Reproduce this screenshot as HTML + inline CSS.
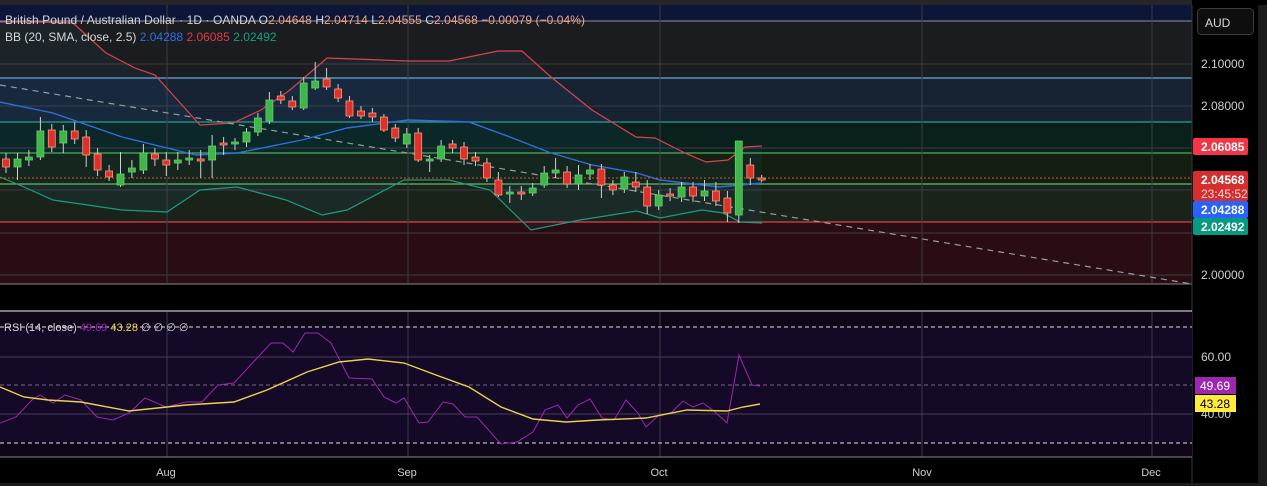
<!DOCTYPE html>
<html><head><meta charset="utf-8"><style>
html,body{margin:0;padding:0;background:#000;}
svg{display:block;font-family:"Liberation Sans",sans-serif;}
.g{fill:#3fb54a;stroke:#5fd06a;stroke-width:0.8}
.r{fill:#e0302c;stroke:#f59b7b;stroke-width:0.8}
.w{stroke:#cfcfcf;stroke-width:1}
</style></head><body>
<svg width="1267" height="486" viewBox="0 0 1267 486" xmlns="http://www.w3.org/2000/svg">
<rect width="1267" height="486" fill="#000"/>
<rect x="0" y="0" width="1267" height="5" fill="#262626"/>
<rect x="0" y="5" width="1192" height="16" fill="#0b1638"/>
<rect x="0" y="21" width="1192" height="57" fill="#1b1c1f"/>
<rect x="0" y="78" width="1192" height="44" fill="#172233"/>
<rect x="0" y="122" width="1192" height="31" fill="#0a201d"/>
<rect x="0" y="153" width="1192" height="31" fill="#141f12"/>
<rect x="0" y="184" width="1192" height="38" fill="#19231a"/>
<rect x="0" y="222" width="1192" height="62" fill="#2a0d12"/>
<g stroke="#3a3d44" stroke-width="1">
<line x1="0" y1="64" x2="1192" y2="64"/>
<line x1="0" y1="106" x2="1192" y2="106"/>
<line x1="0" y1="148" x2="1192" y2="148"/>
<line x1="0" y1="190" x2="1192" y2="190"/>
<line x1="0" y1="233" x2="1192" y2="233"/>
<line x1="0" y1="275" x2="1192" y2="275"/>
</g>
<line x1="0" y1="21" x2="1192" y2="21" stroke="#8a92a8" stroke-width="1"/>
<line x1="0" y1="78" x2="1192" y2="78" stroke="#64a8e0" stroke-width="1.2"/>
<line x1="0" y1="122" x2="1192" y2="122" stroke="#2aa08a" stroke-width="1.2"/>
<line x1="0" y1="153" x2="1192" y2="153" stroke="#4caf50" stroke-width="1.2"/>
<line x1="0" y1="184" x2="1192" y2="184" stroke="#66bb6a" stroke-width="1.2"/>
<line x1="0" y1="222" x2="1192" y2="222" stroke="#e04050" stroke-width="1.2"/>
<line x1="0" y1="284" x2="1192" y2="284" stroke="#8a8a95" stroke-width="1"/>
<g stroke="#3a3d44" stroke-width="1">
<line x1="167" y1="5" x2="167" y2="284"/><line x1="408" y1="5" x2="408" y2="284"/><line x1="660" y1="5" x2="660" y2="284"/><line x1="922" y1="5" x2="922" y2="284"/><line x1="1152" y1="5" x2="1152" y2="284"/>
</g>
<polygon fill="rgba(40,140,200,0.07)" points="0,22 40,22 73,23 106,53 135,68 155,75 200,125 233,123 261,110 290,90 327,58 408,61 449,61 498,51 522,51 551,77 592,110 636,137 655,138 685,153 706,162 728,160 745,147 762,146 762,223 740,222 723,213 702,210 660,218 637,211 580,220 531,230 490,190 449,180 404,180 347,210 322,215 286,200 237,187 200,190 167,212 122,210 53,200 24,187 0,177"/>
<polyline fill="none" stroke="#d8434f" stroke-width="1.2" points="0,22 40,22 73,23 106,53 135,68 155,75 200,125 233,123 261,110 290,90 327,58 408,61 449,61 498,51 522,51 551,77 592,110 636,137 655,138 685,153 706,162 728,160 745,147 762,146"/>
<polyline fill="none" stroke="#2d6fe0" stroke-width="1.4" points="0,102 53,113 122,137 196,155 237,153 302,140 347,128 408,120 469,122 510,137 551,153 592,165 637,173 660,180 719,187 762,183"/>
<polyline fill="none" stroke="#1f9a80" stroke-width="1.2" points="0,177 24,187 53,200 122,210 167,212 200,190 237,187 286,200 322,215 347,210 404,180 449,180 490,190 531,230 580,220 637,211 660,218 702,210 723,213 740,222 762,223"/>
<line x1="0" y1="85" x2="1192" y2="284" stroke="#9a9aa0" stroke-width="1.2" stroke-dasharray="6 5"/>
<line x1="0" y1="178" x2="1192" y2="178" stroke="#e0502c" stroke-width="1" stroke-dasharray="2 2"/>
<g class="w">
<line x1="6" y1="153" x2="6" y2="173"/><line x1="17.5" y1="153" x2="17.5" y2="180"/><line x1="28.9" y1="150" x2="28.9" y2="166"/><line x1="40.4" y1="117" x2="40.4" y2="160"/><line x1="51.8" y1="124" x2="51.8" y2="152"/><line x1="63.3" y1="125" x2="63.3" y2="153"/><line x1="74.7" y1="122" x2="74.7" y2="144"/><line x1="86.2" y1="130" x2="86.2" y2="167"/><line x1="97.6" y1="148" x2="97.6" y2="176"/><line x1="109.1" y1="165" x2="109.1" y2="181"/><line x1="120.5" y1="152" x2="120.5" y2="187"/><line x1="131.9" y1="160" x2="131.9" y2="178"/><line x1="143.4" y1="144" x2="143.4" y2="174"/><line x1="154.9" y1="148" x2="154.9" y2="166"/><line x1="166.3" y1="152" x2="166.3" y2="176"/><line x1="177.8" y1="152" x2="177.8" y2="170"/><line x1="189.2" y1="150" x2="189.2" y2="165"/><line x1="200.7" y1="150" x2="200.7" y2="178"/><line x1="212.1" y1="135" x2="212.1" y2="178"/><line x1="223.6" y1="137" x2="223.6" y2="155"/><line x1="235" y1="138" x2="235" y2="150"/><line x1="246.5" y1="128" x2="246.5" y2="147"/><line x1="257.9" y1="113" x2="257.9" y2="136"/><line x1="269.4" y1="92" x2="269.4" y2="124"/><line x1="280.8" y1="91" x2="280.8" y2="104"/><line x1="292.3" y1="96" x2="292.3" y2="110"/><line x1="303.7" y1="77" x2="303.7" y2="110"/><line x1="315.2" y1="62" x2="315.2" y2="90"/><line x1="326.6" y1="68" x2="326.6" y2="90"/><line x1="338.1" y1="84" x2="338.1" y2="102"/><line x1="349.5" y1="96" x2="349.5" y2="118"/><line x1="361" y1="106" x2="361" y2="119"/><line x1="372.4" y1="108" x2="372.4" y2="122"/><line x1="383.9" y1="114" x2="383.9" y2="132"/><line x1="395.3" y1="124" x2="395.3" y2="142"/><line x1="406.8" y1="128" x2="406.8" y2="148"/><line x1="418.2" y1="128" x2="418.2" y2="162"/><line x1="429.7" y1="155" x2="429.7" y2="172"/><line x1="441.1" y1="140" x2="441.1" y2="162"/><line x1="452.6" y1="140" x2="452.6" y2="153"/><line x1="464" y1="142" x2="464" y2="165"/><line x1="475.5" y1="152" x2="475.5" y2="166"/><line x1="486.9" y1="158" x2="486.9" y2="182"/><line x1="498.4" y1="172" x2="498.4" y2="197"/><line x1="509.8" y1="186" x2="509.8" y2="203"/><line x1="521.3" y1="186" x2="521.3" y2="200"/><line x1="532.7" y1="183" x2="532.7" y2="196"/><line x1="544.2" y1="166" x2="544.2" y2="188"/><line x1="555.6" y1="158" x2="555.6" y2="178"/><line x1="567.1" y1="166" x2="567.1" y2="188"/><line x1="578.5" y1="165" x2="578.5" y2="190"/><line x1="590" y1="164" x2="590" y2="180"/><line x1="601.4" y1="164" x2="601.4" y2="198"/><line x1="612.9" y1="180" x2="612.9" y2="195"/><line x1="624.3" y1="172" x2="624.3" y2="193"/><line x1="635.8" y1="172" x2="635.8" y2="192"/><line x1="647.2" y1="180" x2="647.2" y2="214"/><line x1="658.7" y1="190" x2="658.7" y2="210"/><line x1="670.1" y1="188" x2="670.1" y2="201"/><line x1="681.6" y1="182" x2="681.6" y2="202"/><line x1="693" y1="182" x2="693" y2="202"/><line x1="704.5" y1="180" x2="704.5" y2="201"/><line x1="715.9" y1="182" x2="715.9" y2="206"/><line x1="727.4" y1="191" x2="727.4" y2="222"/><line x1="738.8" y1="141" x2="738.8" y2="223"/><line x1="750.3" y1="158" x2="750.3" y2="185"/><line x1="761.7" y1="175" x2="761.7" y2="182"/>
</g>
<g>
<rect class="r" x="2.5" y="159" width="7" height="8"/>
<rect class="g" x="14" y="159" width="7" height="8"/>
<rect class="g" x="25.4" y="157" width="7" height="3"/>
<rect class="g" x="36.9" y="131" width="7" height="26"/>
<rect class="r" x="48.3" y="130" width="7" height="17"/>
<rect class="g" x="59.8" y="131" width="7" height="12"/>
<rect class="r" x="71.2" y="131" width="7" height="8"/>
<rect class="r" x="82.7" y="137" width="7" height="18"/>
<rect class="r" x="94.1" y="154" width="7" height="16"/>
<rect class="r" x="105.6" y="171" width="7" height="6"/>
<rect class="g" x="117" y="174" width="7" height="11"/>
<rect class="g" x="128.4" y="168" width="7" height="4"/>
<rect class="g" x="139.9" y="153" width="7" height="17"/>
<rect class="r" x="151.4" y="154" width="7" height="5"/>
<rect class="r" x="162.8" y="160" width="7" height="5"/>
<rect class="g" x="174.3" y="160" width="7" height="3"/>
<rect class="g" x="185.7" y="158" width="7" height="2"/>
<rect class="r" x="197.2" y="159" width="7" height="2"/>
<rect class="g" x="208.6" y="146" width="7" height="14"/>
<rect class="r" x="220.1" y="143" width="7" height="2"/>
<rect class="g" x="231.5" y="142" width="7" height="2"/>
<rect class="g" x="243" y="132" width="7" height="10"/>
<rect class="g" x="254.4" y="118" width="7" height="14"/>
<rect class="g" x="265.9" y="100" width="7" height="21"/>
<rect class="r" x="277.3" y="96" width="7" height="4"/>
<rect class="r" x="288.8" y="101" width="7" height="6"/>
<rect class="g" x="300.2" y="83" width="7" height="25"/>
<rect class="g" x="311.7" y="81" width="7" height="7"/>
<rect class="r" x="323.1" y="79" width="7" height="8"/>
<rect class="r" x="334.6" y="89" width="7" height="9"/>
<rect class="r" x="346" y="101" width="7" height="15"/>
<rect class="r" x="357.5" y="111" width="7" height="5"/>
<rect class="r" x="368.9" y="113" width="7" height="4"/>
<rect class="r" x="380.4" y="117" width="7" height="13"/>
<rect class="r" x="391.8" y="128" width="7" height="10"/>
<rect class="g" x="403.3" y="134" width="7" height="10"/>
<rect class="r" x="414.7" y="133" width="7" height="27"/>
<rect class="g" x="426.2" y="159" width="7" height="2"/>
<rect class="g" x="437.6" y="146" width="7" height="13"/>
<rect class="r" x="449.1" y="144" width="7" height="4"/>
<rect class="r" x="460.5" y="147" width="7" height="12"/>
<rect class="r" x="472" y="157" width="7" height="4"/>
<rect class="r" x="483.4" y="163" width="7" height="15"/>
<rect class="r" x="494.9" y="180" width="7" height="15"/>
<rect class="g" x="506.3" y="192" width="7" height="2"/>
<rect class="r" x="517.8" y="192" width="7" height="2"/>
<rect class="g" x="529.2" y="188" width="7" height="5"/>
<rect class="g" x="540.7" y="173" width="7" height="12"/>
<rect class="g" x="552.1" y="170" width="7" height="3"/>
<rect class="r" x="563.6" y="172" width="7" height="12"/>
<rect class="g" x="575" y="175" width="7" height="9"/>
<rect class="g" x="586.5" y="170" width="7" height="4"/>
<rect class="r" x="597.9" y="169" width="7" height="16"/>
<rect class="r" x="609.4" y="185" width="7" height="5"/>
<rect class="g" x="620.8" y="177" width="7" height="12"/>
<rect class="r" x="632.3" y="182" width="7" height="5"/>
<rect class="r" x="643.7" y="187" width="7" height="19"/>
<rect class="g" x="655.2" y="195" width="7" height="11"/>
<rect class="r" x="666.6" y="194" width="7" height="2"/>
<rect class="g" x="678.1" y="187" width="7" height="10"/>
<rect class="r" x="689.5" y="187" width="7" height="9"/>
<rect class="g" x="701" y="191" width="7" height="5"/>
<rect class="r" x="712.4" y="191" width="7" height="10"/>
<rect class="r" x="723.9" y="198" width="7" height="15"/>
<rect class="g" x="735.3" y="141" width="7" height="74"/>
<rect class="r" x="746.8" y="165" width="7" height="13"/>
<rect class="r" x="758.2" y="178" width="7" height="2"/>
</g>
<text x="5" y="24" font-size="12" fill="#d6d6d6" textLength="580" lengthAdjust="spacing">British Pound / Australian Dollar · 1D · OANDA  O<tspan fill="#f4a27e">2.04648</tspan>  H<tspan fill="#f4a27e">2.04714</tspan>  L<tspan fill="#f4a27e">2.04555</tspan>  C<tspan fill="#f4a27e">2.04568</tspan>  <tspan fill="#f4a27e">−0.00079 (−0.04%)</tspan></text>
<text x="5" y="41" font-size="12" fill="#d6d6d6">BB (20, SMA, close, 2.5) <tspan fill="#2f6fe8">2.04288</tspan> <tspan fill="#e03a48">2.06085</tspan> <tspan fill="#14a085">2.02492</tspan></text>
<rect x="1192" y="0" width="75" height="486" fill="#000"/>
<line x1="1192" y1="5" x2="1192" y2="486" stroke="#3a3a3a"/>
<rect x="1258" y="5" width="9" height="481" fill="#1c1c1c"/>
<rect x="1197.5" y="8.5" width="56" height="26" rx="4" fill="#0e0e0e" stroke="#3c3c3c"/>
<text x="1205" y="27" font-size="12" fill="#d8d8d8">AUD</text>
<g font-size="12" fill="#d0d0d0">
<text x="1201" y="68">2.10000</text>
<text x="1201" y="110">2.08000</text>
<text x="1201" y="279">2.00000</text>
</g>
<rect x="1193" y="138" width="55" height="17" rx="2" fill="#f23645"/>
<text x="1201" y="151" font-size="12" font-weight="bold" fill="#fff">2.06085</text>
<rect x="1193" y="171" width="55" height="30" rx="2" fill="#d32f2f"/>
<text x="1201" y="184" font-size="12" font-weight="bold" fill="#fff">2.04568</text>
<text x="1201" y="198" font-size="12" fill="#ffd0d0">23:45:52</text>
<rect x="1193" y="201" width="55" height="17" rx="2" fill="#2962ff"/>
<text x="1201" y="214" font-size="12" font-weight="bold" fill="#fff">2.04288</text>
<rect x="1193" y="218" width="55" height="17" rx="2" fill="#089981"/>
<text x="1201" y="231" font-size="12" font-weight="bold" fill="#fff">2.02492</text>
<line x1="0" y1="311" x2="1192" y2="311" stroke="#c8c8c8" stroke-width="1.2"/>
<rect x="0" y="312" width="1192" height="145" fill="#0f0719"/>
<rect x="0" y="327" width="1192" height="116" fill="#140926"/>
<g stroke="#3a3d44"><line x1="167" y1="312" x2="167" y2="457"/><line x1="408" y1="312" x2="408" y2="457"/><line x1="660" y1="312" x2="660" y2="457"/><line x1="922" y1="312" x2="922" y2="457"/><line x1="1152" y1="312" x2="1152" y2="457"/></g>
<line x1="0" y1="357" x2="1192" y2="357" stroke="#4a3f5a"/>
<line x1="0" y1="414" x2="1192" y2="414" stroke="#4a3f5a"/>
<line x1="0" y1="327" x2="1192" y2="327" stroke="#e0e0e0" stroke-dasharray="4 3"/>
<line x1="0" y1="443" x2="1192" y2="443" stroke="#e0e0e0" stroke-dasharray="4 3"/>
<line x1="0" y1="385" x2="1192" y2="385" stroke="#7a6a8a" stroke-dasharray="4 3"/>
<polyline fill="none" stroke="#9c27b0" stroke-width="1" points="0,423 16,417 32,400 40,395 53,403 65,395 81,400 97,417 113,420 129,413 145,398 166,407 186,402 202,402 218,385 234,383 271,343 283,343 293,352 305,333 318,333 331,343 349,378 372,379 384,397 396,403 404,398 419,423 428,422 443,402 453,404 465,417 477,417 501,444 517,442 533,432 545,410 558,405 567,418 578,405 590,399 602,418 614,420 626,400 638,413 646,427 659,415 671,413 683,401 693,407 703,403 715,412 727,423 739,355 752,385 760,386"/>
<polyline fill="none" stroke="#e8d44a" stroke-width="1.4" points="0,387 24,397 48,400 81,402 129,411 186,405 234,402 267,390 307,372 339,362 368,359 404,363 436,375 469,387 501,407 533,419 566,422 598,420 646,418 687,410 727,411 743,407 760,404"/>
<text x="4" y="331" font-size="11" fill="#d6d6d6">RSI (14, close) <tspan fill="#9c27b0">49.69</tspan> <tspan fill="#e8d44a">43.28</tspan> ∅ ∅ ∅ ∅</text>
<text x="1201" y="361" font-size="12" fill="#d0d0d0">60.00</text>
<text x="1201" y="418" font-size="12" fill="#d0d0d0">40.00</text>
<rect x="1195" y="377" width="41" height="17" fill="#9c27b0"/>
<text x="1200" y="390" font-size="12" fill="#fff">49.69</text>
<rect x="1195" y="395" width="41" height="17" fill="#ffeb3b"/>
<text x="1200" y="408" font-size="12" fill="#000">43.28</text>
<line x1="0" y1="457" x2="1192" y2="457" stroke="#888" stroke-width="1"/>
<g font-size="11" fill="#d0d0d0" text-anchor="middle">
<text x="166" y="476">Aug</text><text x="407" y="476">Sep</text><text x="659" y="476">Oct</text><text x="922" y="476">Nov</text><text x="1151" y="476">Dec</text>
</g>
<rect x="0" y="483" width="1267" height="3" fill="#1c1c1c"/>
</svg>
</body></html>
